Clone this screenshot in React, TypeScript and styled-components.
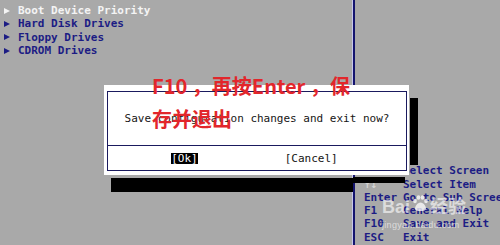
import React from "react";
import styled, { createGlobalStyle } from "styled-components";

const GlobalStyle = createGlobalStyle`
  html, body { margin: 0; padding: 0; background: #a9a9a9; overflow: hidden; }
  #root { width: 500px; height: 245px; }
`;

const NAVY = "#1c1c84";

const Screen = styled.div`
  position: relative;
  width: 500px;
  height: 245px;
  display: grid;
  grid-template-columns: 352px 3px 1fr;
  background: #a9a9a9;
  overflow: hidden;
  font-family: "DejaVu Sans Mono", "Liberation Mono", monospace;
  font-size: 11px;
  line-height: 13.3px;
`;

const LeftPanel = styled.div`
  display: flex;
  flex-direction: column;
  padding: 4px 0 0 4px;
`;

const MenuItem = styled.div<{ $selected?: boolean }>`
  display: flex;
  align-items: center;
  gap: 8px;
  height: 13.3px;
  font-weight: bold;
  white-space: nowrap;
  color: ${(p) => (p.$selected ? "#f4f4f4" : NAVY)};
`;

const Arrow = styled.span`
  width: 0;
  height: 0;
  border-left: 6px solid currentColor;
  border-top: 3px solid transparent;
  border-bottom: 3px solid transparent;
`;

const Divider = styled.div`
  border-left: 1px solid #c6c6ec;
  background: #14146e;
`;

const RightPanel = styled.div`
  display: flex;
  flex-direction: column;
  justify-content: flex-end;
  padding: 0 0 1px 9px;
  white-space: nowrap;
  overflow: hidden;
`;

const HelpRow = styled.div`
  display: flex;
  height: 13.3px;
  font-weight: bold;
  color: ${NAVY};
`;

const HelpKey = styled.span<{ $dim?: boolean }>`
  width: 39px;
  flex: none;
  color: ${(p) => (p.$dim ? "#d4d4d4" : NAVY)};
`;

const HelpDesc = styled.span``;

const Dialog = styled.div`
  position: absolute;
  left: 104px;
  top: 85px;
  width: 305px;
  height: 90px;
  box-sizing: border-box;
  padding: 6px 2px 4px 3px;
  background: #ffffff;
  z-index: 3;
`;

const Frame = styled.div`
  height: 100%;
  box-sizing: border-box;
  border: 1px solid #1a1a5e;
  display: flex;
  flex-direction: column;
`;

const Message = styled.div`
  height: 53px;
  flex: none;
  display: flex;
  align-items: center;
  justify-content: center;
  border-bottom: 1px solid #1a1a5e;
  color: #151515;
  white-space: nowrap;
`;

const ButtonRow = styled.div`
  flex: 1;
  display: flex;
  align-items: center;
  justify-content: center;
  gap: 87px;
  padding-right: 5px;
`;

const DlgButton = styled.span<{ $active?: boolean }>`
  line-height: 11px;
  padding: 0;
  background: ${(p) => (p.$active ? "#000" : "transparent")};
  color: ${(p) => (p.$active ? "#fff" : "#151515")};
`;

const Shadow = styled.div`
  position: absolute;
  background: #000;
  z-index: 2;
`;

const Note = styled.div`
  position: absolute;
  left: 152px;
  top: 69px;
  z-index: 5;
  color: #e2262b;
  font-family: "Noto Sans CJK SC", "Noto Sans", sans-serif;
  font-weight: 700;
  font-size: 20px;
  line-height: 33px;
  white-space: pre;
`;

const NoteLine = styled.div``;

const Watermark = styled.div`
  position: absolute;
  left: 382px;
  top: 194px;
  z-index: 4;
  color: rgba(255, 255, 255, 0.6);
  font-family: "Liberation Sans", "Noto Sans CJK SC", sans-serif;
  pointer-events: none;
`;

const MarkTitle = styled.div`
  display: flex;
  align-items: flex-end;
  font-size: 18px;
  font-weight: bold;
  line-height: 22px;
`;

const MarkUrl = styled.div`
  font-size: 9px;
  line-height: 10px;
  margin-top: 2px;
  letter-spacing: 0.3px;
`;

const Paw = () => (
  <svg width="18" height="18" viewBox="0 0 18 18" style={{ margin: "0 1px 6px 1px" }}>
    <g fill="rgba(255,255,255,0.75)">
      <ellipse cx="4" cy="7" rx="1.8" ry="2.3" />
      <ellipse cx="7.5" cy="3.5" rx="1.8" ry="2.3" />
      <ellipse cx="11.5" cy="3.5" rx="1.8" ry="2.3" />
      <ellipse cx="15" cy="7" rx="1.8" ry="2.3" />
      <path d="M9.5 8.5c-3 0-5.5 4-5.5 6s2 2.5 5.5 2.5 5.5-0.5 5.5-2.5-2.5-6-5.5-6z" />
    </g>
  </svg>
);

const menu = [
  { label: "Boot Device Priority", selected: true },
  { label: "Hard Disk Drives" },
  { label: "Floppy Drives" },
  { label: "CDROM Drives" },
];

const help = [
  { key: "→←", desc: "Select Screen" },
  { key: "↑↓", desc: "Select Item", dim: true },
  { key: "Enter", desc: "Go to Sub Screen" },
  { key: "F1", desc: "General Help" },
  { key: "F10", desc: "Save and Exit" },
  { key: "ESC", desc: "Exit" },
];

export default function App() {
  return (
    <>
      <GlobalStyle />
      <Screen>
        <LeftPanel>
          {menu.map((m) => (
            <MenuItem key={m.label} $selected={m.selected}>
              <Arrow />
              {m.label}
            </MenuItem>
          ))}
        </LeftPanel>
        <Divider />
        <RightPanel>
          {help.map((h) => (
            <HelpRow key={h.key}>
              <HelpKey $dim={h.dim}>{h.key}</HelpKey>
              <HelpDesc>{h.desc}</HelpDesc>
            </HelpRow>
          ))}
        </RightPanel>

        <Shadow style={{ left: 410, top: 98, width: 8, height: 67 }} />
        <Shadow style={{ left: 111, top: 178, width: 242, height: 14 }} />
        <Shadow style={{ left: 353, top: 177, width: 52, height: 6 }} />

        <Dialog>
          <Frame>
            <Message>Save configuration changes and exit now?</Message>
            <ButtonRow>
              <DlgButton $active>[Ok]</DlgButton>
              <DlgButton>[Cancel]</DlgButton>
            </ButtonRow>
          </Frame>
        </Dialog>

        <Note>
          <NoteLine>F10 ，再按Enter ，保</NoteLine>
          <NoteLine>存并退出</NoteLine>
        </Note>

        <Watermark>
          <MarkTitle>
            Bai
            <Paw />
            经验
          </MarkTitle>
          <MarkUrl>jingyan.baidu.com</MarkUrl>
        </Watermark>
      </Screen>
    </>
  );
}
